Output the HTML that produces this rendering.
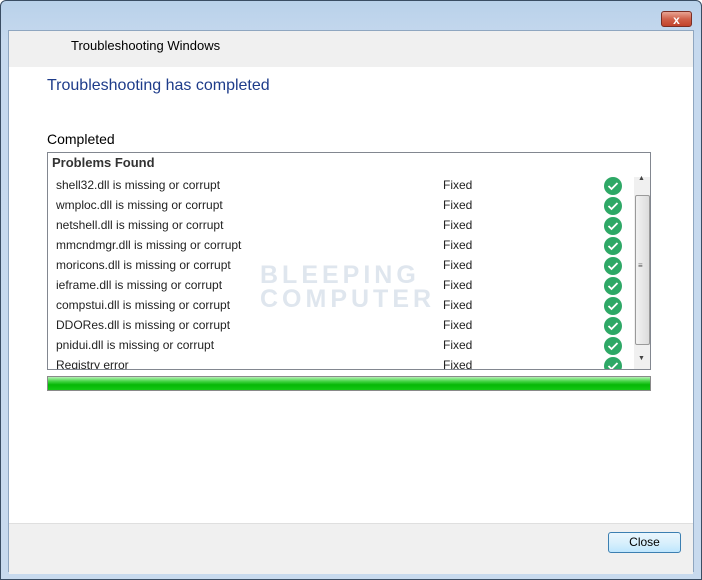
<!DOCTYPE html>
<html><head><style>
body{margin:0;width:702px;height:580px;overflow:hidden;font-family:"Liberation Sans",sans-serif;font-size:12px;}
.frame{position:absolute;left:0;top:0;width:700px;height:578px;border:1px solid #3a4d63;border-radius:6px 6px 0 0;background:linear-gradient(#b9d1ea,#c6d9ee 40px,#c8daee);}
.client{position:absolute;left:8px;top:30px;width:686px;height:542px;background:#fff;border:1px solid #8fa6c0;box-sizing:border-box;}
.hdr{position:absolute;left:0;top:0;width:100%;height:36px;background:#f0f0f0;}
.ftr{position:absolute;left:0;top:492px;width:100%;height:50px;background:#f0f0f0;border-top:1px solid #dfdfdf;}
.abs{position:absolute;}
.x{position:absolute;left:661px;top:11px;width:31px;height:16px;border:1px solid #7a2e24;border-radius:3px;background:linear-gradient(#e8a493,#d0614a 50%,#c2432c);color:#fff;font-weight:bold;text-align:center;line-height:16px;font-size:12px;box-sizing:border-box;}
.list{position:absolute;left:47px;top:152px;width:604px;height:218px;border:1px solid #828790;box-sizing:border-box;overflow:hidden;}
.row{position:absolute;left:9px;height:20px;line-height:20px;color:#222;}
.fx{position:absolute;left:387px;}
.ck{position:absolute;left:548px;top:2px;width:18px;height:18px;border-radius:50%;background:#2ea866;}
.ck svg{position:absolute;left:3px;top:4px;}
.sb{position:absolute;left:586px;top:24px;width:16px;height:192px;background:#f0f0f0;}
.btn{position:absolute;left:608px;top:532px;width:73px;height:21px;border:1px solid #3c7fb1;border-radius:3px;background:linear-gradient(#eaf6fd,#d9f0fc 50%,#bee6fd);box-sizing:border-box;text-align:center;line-height:19px;}
</style></head><body>
<div class="frame"></div>
<div class="x">x</div>
<div class="client">
<div class="hdr"><div class="abs" style="left:62px;top:7px;font-size:13px;color:#000">Troubleshooting Windows</div></div>
<div class="ftr"></div>
</div>
<div class="abs" style="left:47px;top:77px;font-size:16px;color:#1e3c8a">Troubleshooting has completed</div>
<div class="abs" style="left:47px;top:131px;font-size:14px;color:#000">Completed</div>
<div class="abs" style="left:260px;top:263px;font-size:25px;font-weight:bold;color:#dfe6ee;letter-spacing:4px;line-height:24px">BLEEPING<br>COMPUTER</div>
<div class="list">
<div class="abs" style="left:4px;top:2px;font-weight:bold;font-size:13px;color:#333">Problems Found</div>
<div class="sb">
<div class="abs" style="left:1px;top:18px;width:13px;height:148px;border:1px solid #9a9a9a;border-radius:2px;background:linear-gradient(90deg,#f2f2f2,#dcdcdc);"></div>
<div class="abs" style="left:4px;top:-2px;font-size:7px;color:#444">▲</div>
<div class="abs" style="left:4px;top:178px;font-size:7px;color:#444">▼</div>
<div class="abs" style="left:4px;top:84px;font-size:8px;color:#555">≡</div>
</div>
</div>
<div class="abs" style="left:47px;top:152px;width:587px;height:217px;overflow:hidden">
<div id="rows"></div>
</div>
<div class="abs" style="left:47px;top:376px;width:604px;height:15px;border:1px solid #8a8a8a;box-sizing:border-box;background:linear-gradient(#b6f0b6,#3fd23f 35%,#06b806 60%,#14c814);"></div>
<div class="btn">Close</div>
<script>
var items=["shell32.dll is missing or corrupt","wmploc.dll is missing or corrupt","netshell.dll is missing or corrupt","mmcndmgr.dll is missing or corrupt","moricons.dll is missing or corrupt","ieframe.dll is missing or corrupt","compstui.dll is missing or corrupt","DDORes.dll is missing or corrupt","pnidui.dll is missing or corrupt","Registry error"];
var h="";items.forEach(function(t,i){h+='<div class="row" style="top:'+(23+i*20)+'px;width:580px">'+t+'<span class="fx">Fixed</span><div class="ck"><svg width="12" height="10"><path d="M1.5 5 L4.5 8 L10.5 2" stroke="#fff" stroke-width="1.8" fill="none"/></svg></div></div>';});
document.getElementById("rows").innerHTML=h;
</script>
</body></html>
